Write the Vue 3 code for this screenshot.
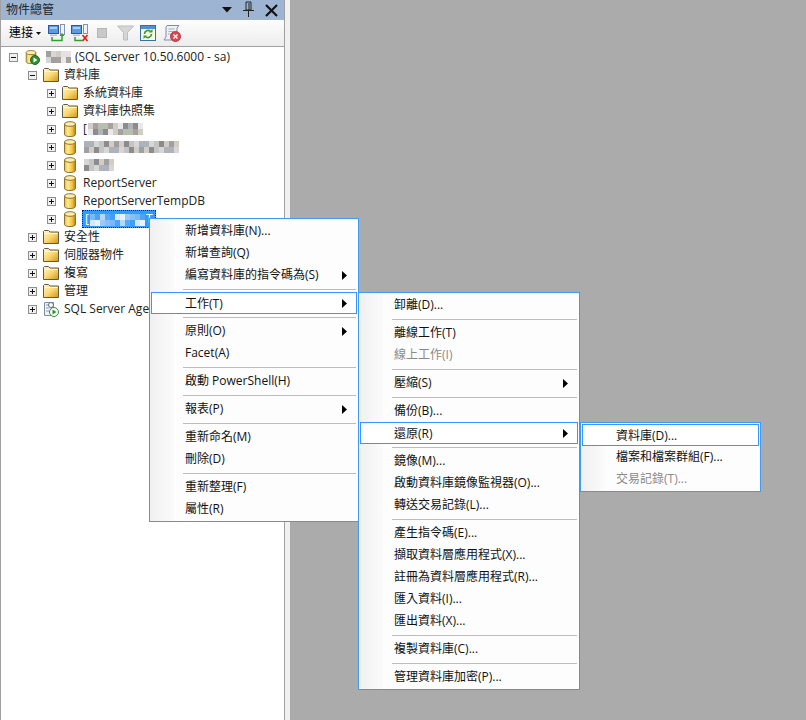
<script setup>
const shades = ['#c4c4c4', '#e2e2e2', '#a0a0a0', '#d2ccc6', '#eeeeee', '#aeb3ba', '#8c8c8c', '#d6d6d6', '#b9bdad', '#e8e8e8', '#a8a09e']
const blues = ['#9cc9f5', '#5aa8f8', '#d6e9fb', '#3f9ffb', '#7ab9f7', '#b6d8f8', '#4ba3fa', '#e6f2fc', '#8abff5']

// pixelated name: colours repeat but look random enough
const mosaic = (cols, seed, palette = shades) => {
  const cells = []
  for (let i = 0; i < cols * 2; i++) {
    cells.push(palette[(i * i * 3 + i * seed + seed) % palette.length])
  }
  return cells
}

const rows = [
  { level: 0, box: 'minus', icon: 'server', cells: mosaic(5, 2), label: '(SQL Server 10.50.6000 - sa)' },
  { level: 1, box: 'minus', icon: 'folder', label: '資料庫' },
  { level: 2, box: 'plus', icon: 'folder', label: '系統資料庫' },
  { level: 2, box: 'plus', icon: 'folder', label: '資料庫快照集' },
  { level: 2, box: 'plus', icon: 'db', prefix: '[', cells: mosaic(11, 3) },
  { level: 2, box: 'plus', icon: 'db', cells: mosaic(19, 5) },
  { level: 2, box: 'plus', icon: 'db', cells: mosaic(6, 7) },
  { level: 2, box: 'plus', icon: 'db', label: 'ReportServer' },
  { level: 2, box: 'plus', icon: 'db', label: 'ReportServerTempDB' },
  { level: 2, box: 'plus', icon: 'db', prefix: '[', cells: mosaic(11, 4, blues), tail: 'T', selected: true },
  { level: 1, box: 'plus', icon: 'folder', label: '安全性' },
  { level: 1, box: 'plus', icon: 'folder', label: '伺服器物件' },
  { level: 1, box: 'plus', icon: 'folder', label: '複寫' },
  { level: 1, box: 'plus', icon: 'folder', label: '管理' },
  { level: 1, box: 'plus', icon: 'agent', label: 'SQL Server Agent' }
]

const sep = { sep: true }

const firstMenu = [
  { label: '新增資料庫(N)...' },
  { label: '新增查詢(Q)' },
  { label: '編寫資料庫的指令碼為(S)', sub: true },
  sep,
  { label: '工作(T)', sub: true, active: true },
  sep,
  { label: '原則(O)', sub: true },
  { label: 'Facet(A)' },
  sep,
  { label: '啟動 PowerShell(H)' },
  sep,
  { label: '報表(P)', sub: true },
  sep,
  { label: '重新命名(M)' },
  { label: '刪除(D)' },
  sep,
  { label: '重新整理(F)' },
  { label: '屬性(R)' }
]

const taskMenu = [
  { label: '卸離(D)...' },
  sep,
  { label: '離線工作(T)' },
  { label: '線上工作(I)', off: true },
  sep,
  { label: '壓縮(S)', sub: true },
  sep,
  { label: '備份(B)...' },
  { label: '還原(R)', sub: true, active: true },
  sep,
  { label: '鏡像(M)...' },
  { label: '啟動資料庫鏡像監視器(O)...' },
  { label: '轉送交易記錄(L)...' },
  sep,
  { label: '產生指令碼(E)...' },
  { label: '擷取資料層應用程式(X)...' },
  { label: '註冊為資料層應用程式(R)...' },
  { label: '匯入資料(I)...' },
  { label: '匯出資料(X)...' },
  sep,
  { label: '複製資料庫(C)...' },
  sep,
  { label: '管理資料庫加密(P)...' }
]

const restoreMenu = [
  { label: '資料庫(D)...', active: true },
  { label: '檔案和檔案群組(F)...' },
  { label: '交易記錄(T)...', off: true }
]

const menus = [
  { id: 'first', items: firstMenu },
  { id: 'task', items: taskMenu },
  { id: 'restore', items: restoreMenu }
]
</script>

<template>
  <div class="app">
    <svg class="defs" width="0" height="0">
      <defs>
        <linearGradient id="folderFill" x1="0" y1="0" x2="1" y2="1">
          <stop offset="0" stop-color="#fff6cf" />
          <stop offset="0.5" stop-color="#fbd873" />
          <stop offset="1" stop-color="#d2930f" />
        </linearGradient>
        <linearGradient id="dbFill" x1="0" y1="0" x2="1" y2="0">
          <stop offset="0" stop-color="#eab93a" />
          <stop offset="0.3" stop-color="#ffeb97" />
          <stop offset="0.7" stop-color="#f3c23e" />
          <stop offset="1" stop-color="#b17d10" />
        </linearGradient>
        <symbol id="folder" viewBox="0 0 16 16">
          <path d="M.5 14.500V2.500l1-1h4l1.500 1.500h8.500v11.500z" fill="url(#folderFill)" stroke="#5f5a4e" />
          <path d="M1.500 4.500h13" stroke="#fffdf0" />
        </symbol>
        <symbol id="db" viewBox="0 0 16 16">
          <path d="M2.500 3v10.500c0 2.700 11 2.700 11 0V3z" fill="url(#dbFill)" stroke="#8f7430" />
          <ellipse cx="8" cy="3" rx="5.500" ry="2.300" fill="#fdeeb0" stroke="#8f7430" />
        </symbol>
      </defs>
    </svg>

    <div class="explorer">
      <div class="title-bar">
        <span class="title">物件總管</span>
        <svg class="title-btn" width="10" height="6" viewBox="0 0 10 6">
          <path d="M0 0h10L5 5.500z" fill="#111" />
        </svg>
        <svg class="title-btn pin" width="11" height="16" viewBox="0 0 11 16">
          <path d="M3 1h5v8H3z" fill="none" stroke="#222" />
          <path d="M6 2v7" stroke="#222" />
          <path d="M0 9.500h11" stroke="#222" />
          <path d="M5.500 10v6" stroke="#222" />
        </svg>
        <svg class="title-btn close" width="13" height="13" viewBox="0 0 13 13">
          <path d="M1 1l11 11M12 1L1 12" stroke="#111" stroke-width="2.200" />
        </svg>
      </div>

      <div class="toolbar">
        <span class="connect">連接</span>
        <svg class="caret" width="5" height="3" viewBox="0 0 5 3"><path d="M0 0h5L2.500 3z" fill="#111" /></svg>
        <svg class="tool first" width="18" height="18" viewBox="0 0 18 18">
          <rect x="0.500" y="1.500" width="10" height="8" fill="#5b9be6" stroke="#2a5a9c" />
          <path d="M2 3h7v2H2z" fill="#a8d0f8" />
          <path d="M2 10.500h7v1.500H2z" fill="#b9c3cf" />
          <rect x="12.500" y="0.500" width="4" height="10" fill="#eef1f5" stroke="#8494a8" />
          <path d="M4 13v3.500h10V11" fill="none" stroke="#2f9e34" stroke-width="1.500" />
          <path d="M11.500 12l2.500-3 2.500 3z" fill="#2f9e34" />
        </svg>
        <svg class="tool" width="18" height="18" viewBox="0 0 18 18">
          <rect x="0.500" y="1.500" width="10" height="8" fill="#5b9be6" stroke="#2a5a9c" />
          <path d="M2 3h7v2H2z" fill="#a8d0f8" />
          <path d="M2 10.500h7v1.500H2z" fill="#b9c3cf" />
          <rect x="12.500" y="0.500" width="4" height="9" fill="#eef1f5" stroke="#8494a8" />
          <path d="M4 13v3.500h7" fill="none" stroke="#2f9e34" stroke-width="1.500" />
          <path d="M11.500 11l5 6M16.500 11l-5 6" stroke="#d8261c" stroke-width="1.800" />
        </svg>
        <svg class="tool stop" width="10" height="10" viewBox="0 0 10 10">
          <rect x="0.500" y="0.500" width="9" height="9" fill="#c9c9c9" stroke="#b6b6b6" />
        </svg>
        <svg class="tool filter" width="17" height="16" viewBox="0 0 17 16">
          <path d="M.5 1h16l-6 6.500V15h-4V7.500z" fill="#d6d6d6" stroke="#bcbcbc" />
        </svg>
        <svg class="tool refresh" width="16" height="16" viewBox="0 0 16 16">
          <rect x="0.500" y="0.500" width="15" height="15" fill="#f6f8e8" stroke="#3b6ea8" />
          <rect x="1" y="1" width="14" height="3" fill="#4f8fd4" />
          <path d="M4.500 9a3.500 3.500 0 0 1 6-2.500M11.500 9a3.500 3.500 0 0 1-6 2.500" fill="none" stroke="#3a9a24" stroke-width="1.600" />
          <path d="M9 7.500h3.500V4zM7 10.500H3.500V14z" fill="#3a9a24" />
        </svg>
        <svg class="tool scroll" width="18" height="18" viewBox="0 0 18 18">
          <path d="M4 1.500h12l-2 2.500v8l-1 4H1l2-3V3z" fill="#eef1f5" stroke="#7f8fa3" />
          <path d="M5.500 5h6M5.500 7.500h5M5 10h3" stroke="#9fb0c4" />
          <circle cx="12.500" cy="12.500" r="5" fill="#d8474f" stroke="#b93a40" />
          <path d="M10.500 10.500l4 4M14.500 10.500l-4 4" stroke="#fff" stroke-width="1.400" />
        </svg>
      </div>

      <div class="tree">
        <div v-for="(row, i) in rows" :key="i" class="tree-row" :class="'level-' + row.level">
          <svg class="expander" width="9" height="9" viewBox="0 0 9 9">
            <rect x="0.500" y="0.500" width="8" height="8" fill="#f0f0f0" stroke="#8e8e8e" />
            <path d="M2 4.500h5" stroke="#111" />
            <path v-if="row.box === 'plus'" d="M4.500 2v5" stroke="#111" />
          </svg>
          <svg v-if="row.icon === 'folder' || row.icon === 'db'" class="node-icon" width="16" height="16">
            <use :href="'#' + row.icon" />
          </svg>
          <svg v-else-if="row.icon === 'server'" class="node-icon" width="16" height="16" viewBox="0 0 16 16">
            <use href="#db" width="14" height="16" />
            <circle cx="11" cy="11" r="4.500" fill="#2f8f2f" stroke="#1f6b25" />
            <path d="M9.500 8.500l4 2.500-4 2.500z" fill="#fff" />
          </svg>
          <svg v-else class="node-icon" width="16" height="16" viewBox="0 0 16 16">
            <path d="M1.500 1.500h9v13h-9z" fill="#eef2f7" stroke="#7f8fa3" />
            <path d="M3 4h3M3 7h3M3 10h3" stroke="#8fa0b5" />
            <circle cx="8" cy="4" r="2.500" fill="#fff" stroke="#5d6d80" />
            <circle cx="11" cy="11" r="4.500" fill="#fff" stroke="#2f8f2f" />
            <path d="M9.500 8.500l4 2.500-4 2.500z" fill="#2f8f2f" />
          </svg>
          <span class="node-label" :class="{ selected: row.selected }">
            <span v-if="row.prefix">{{ row.prefix }}</span>
            <span v-if="row.cells" class="mosaic">
              <i v-for="(c, n) in row.cells" :key="n" :style="{ background: c }"></i>
            </span>
            <span v-if="row.tail">{{ row.tail }}</span>
            <span v-if="row.label" :class="{ 'after-mosaic': row.cells }">{{ row.label }}</span>
          </span>
        </div>
      </div>
    </div>
    <div class="splitter"></div>

    <div v-for="menu in menus" :key="menu.id" class="menu" :class="'menu-' + menu.id">
      <template v-for="(item, i) in menu.items" :key="i">
        <div v-if="item.sep" class="menu-sep"></div>
        <div v-else class="menu-item" :class="{ active: item.active, off: item.off }">
          <span>{{ item.label }}</span>
          <svg v-if="item.sub" class="sub-arrow" width="5" height="9" viewBox="0 0 5 9"><path d="M0 0l5 4.500L0 9z" fill="#000" /></svg>
        </div>
      </template>
    </div>
  </div>
</template>

<style scoped>
.app {
  position: relative;
  display: flex;
  width: 806px;
  height: 720px;
  overflow: hidden;
  background: #ababab;
  font-family: "Open Sans", "Noto Sans CJK TC", sans-serif;
  font-size: 12px;
  color: #111;
}

.defs {
  position: absolute;
}

.explorer {
  display: flex;
  flex-direction: column;
  width: 284px;
  border-left: 1px solid #a0a0a0;
  box-sizing: border-box;
  background: #fff;
}

.splitter {
  width: 7px;
  box-sizing: border-box;
  border-left: 1px solid #a0a0a0;
  border-right: 1px solid #a8a8a8;
  background: #f0f0f0;
}

.title-bar {
  display: flex;
  align-items: center;
  height: 20px;
  padding: 0 6px 0 5px;
  background: #9db5d2;
}

.title {
  flex: 1;
  padding-bottom: 2px;
  color: #1c2530;
}

.title-btn {
  margin-left: 11px;
}

.title-btn.pin {
  margin-top: -3px;
}

.toolbar {
  display: flex;
  align-items: center;
  height: 26px;
  padding-left: 8px;
  border-bottom: 1px solid #a0a0a0;
  background: linear-gradient(#fdfdfd, #ececec);
}

.connect {
  padding-bottom: 2px;
  color: #000;
}

.caret {
  margin-left: 3px;
}

.tool {
  margin-left: 5px;
}

.tool.first {
  margin-left: 7px;
}

.tool.stop {
  margin-left: 8px;
}

.tool.filter {
  margin-left: 10px;
}

.tool.refresh {
  margin-left: 6px;
}

.tool.scroll {
  margin-left: 7px;
}

.tree {
  flex: 1;
  padding-top: 1px;
}

.tree-row {
  display: flex;
  align-items: center;
  height: 18px;
  white-space: nowrap;
}

.level-0 {
  padding-left: 8px;
}

.level-1 {
  padding-left: 27px;
}

.level-2 {
  padding-left: 46px;
}

.expander {
  flex: none;
}

.node-icon {
  flex: none;
  margin-left: 6px;
}

.node-label {
  display: flex;
  align-items: center;
  box-sizing: border-box;
  height: 18px;
  margin-left: 5px;
  padding-bottom: 2px;
  color: #222;
}

.node-label.selected {
  margin-left: 4px;
  padding: 0 2px 1px;
  border: 1px dotted #222;
  background: #3399ff;
  color: #fff;
}

.mosaic {
  display: inline-grid;
  grid-auto-flow: column;
  grid-template-rows: repeat(2, 6px);
  grid-auto-columns: 5px;
  margin: 2px 1px 0;
  filter: blur(0.4px);
}

.after-mosaic {
  margin-left: 3px;
}

.menu {
  position: absolute;
  box-sizing: border-box;
  padding: 1px;
  border: 1px solid #3f9bf2;
  background: linear-gradient(90deg, #f0f0f0, #fbfbfb 24px, #fdfdfd 24px);
  color: #111;
}

.menu-first {
  left: 149px;
  top: 218px;
  width: 210px;
}

.menu-task {
  left: 358px;
  top: 292px;
  width: 222px;
}

.menu-restore {
  left: 580px;
  top: 422px;
  width: 181px;
}

.menu-item {
  display: flex;
  align-items: center;
  justify-content: space-between;
  box-sizing: border-box;
  height: 22px;
  padding: 0 10px 2px 34px;
  white-space: nowrap;
}

.menu-item.active {
  padding-left: 33px;
  padding-right: 9px;
  padding-bottom: 1px;
  border: 1px solid #3399ff;
  background: #fff;
}

.sub-arrow {
  margin-top: 2px;
}

.menu-item.off {
  color: #8a8a8a;
}

.menu-sep {
  height: 1px;
  margin: 3px 1px 2px 32px;
  background: #bcbcbc;
}
</style>
